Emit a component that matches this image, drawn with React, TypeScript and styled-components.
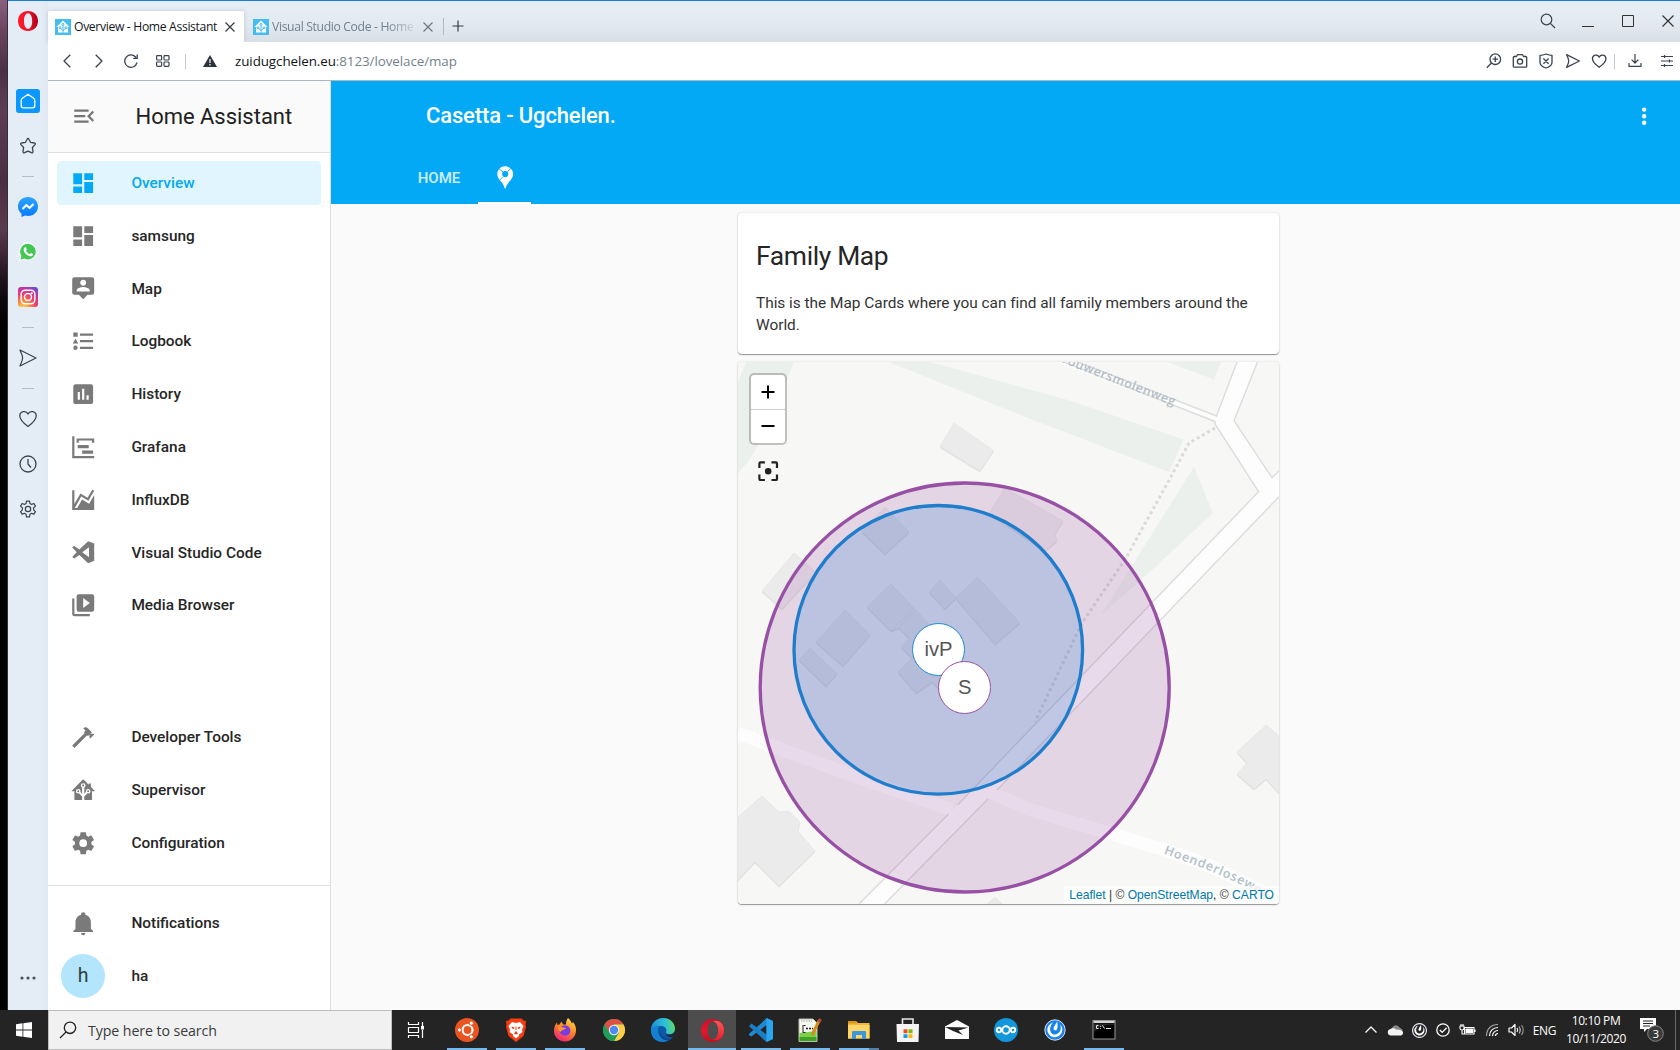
import React from "react";
import styled, { createGlobalStyle, css } from "styled-components";

const ui = `"Open Sans", "Noto Sans", sans-serif`;
const roboto = `Roboto, "Noto Sans", sans-serif`;

const Global = createGlobalStyle`
  *, *::before, *::after { box-sizing: border-box; }
  html, body { margin: 0; padding: 0; overflow: hidden; background: #000; }
  svg { display: block; flex: none; }
`;

/* ---------- frame ---------- */
const Desktop = styled.div`
  width: 1680px; height: 1050px; display: flex; flex-direction: column; overflow: hidden;
  font-family: ${ui};
`;
const Upper = styled.div`display: flex; height: 1010px;`;
const Wallpaper = styled.div`
  width: 8px; flex: none; border-right: 1px solid #34303a;
  background: linear-gradient(#8a6080 0, #6b4560 30px, #4b3045 70px, #5d3d55 110px, #4a2f42 180px, #5a3a4e 230px, #241520 275px, #0c070b 300px, #000 325px);
`;
const Browser = styled.div`flex: 1; display: flex; min-width: 0; border-top: 1px solid #1a7fd4; background: #e4ecf5;`;
const Rail = styled.nav`
  width: 40px; flex: none; display: flex; flex-direction: column; align-items: center; height: 1009px;
  background: linear-gradient(90deg, #e4ecf5 82%, #e0e8f4);
`;
const RailTop = styled.div`height: 77px; padding-top: 10px;`;
const RailCell = styled.div`height: 45px; width: 40px; display: flex; align-items: center; justify-content: center; padding-right: 1px;`;
const RailSep = styled.div`
  height: 16px; display: flex; align-items: center;
  &::after { content: ""; width: 12px; height: 1px; background: #b3bec8; }
`;
const RailHome = styled.div`
  width: 24px; height: 24px; border-radius: 3px; background: #0a97ff; display: flex; align-items: center; justify-content: center;
  margin-right: -1px;
`;
const RailMore = styled.div`margin-top: auto; height: 64px;`;
const Main = styled.div`flex: 1; min-width: 0; display: flex; flex-direction: column;`;

/* ---------- tabs ---------- */
const TabBar = styled.div`
  height: 41px; display: flex; align-items: flex-end; background: linear-gradient(#e6eef6 0, #e3eaf2 50%, #d8dfe7);
`;
const Tab = styled.div<{ $active?: boolean }>`
  height: 31px; width: ${p => (p.$active ? 196 : 199)}px; display: flex; align-items: center;
  padding: ${p => (p.$active ? "0 9px 0 7px" : "0 10px 0 9px")};
  font-size: 12.2px; line-height: 16px; white-space: nowrap; letter-spacing: -0.35px;
  color: ${p => (p.$active ? "#14181c" : "#70808f")};
  ${p => p.$active && css`background: #fff; border-radius: 2px 2px 0 0; box-shadow: 0 0 4px rgba(120,140,165,.35);`}
`;
const TabText = styled.span<{ $fade?: boolean }>`
  margin-left: 3px;
  ${p => p.$fade && css`mask-image: linear-gradient(90deg, #000 82%, rgba(0,0,0,.2));`}
`;
const TabClose = styled.span`margin-left: auto;`;
const TabSep = styled.span`width: 1px; height: 17px; background: #b0b9c2; margin-bottom: 7px;`;
const NewTab = styled.span`margin: 0 0 10px 8px;`;
const WinButtons = styled.div`margin: 0 -8px 0 auto; display: flex; height: 41px;`;
const WinButton = styled.div`width: 40px; height: 40px; display: flex; align-items: center; justify-content: center;`;

/* ---------- address bar ---------- */
const AddressBar = styled.div`
  height: 39px; background: #fff; border-bottom: 1px solid #abb8c4; display: flex; align-items: center; padding-left: 3px;
`;
const NavCell = styled.div<{ $w?: number }>`
  width: ${p => p.$w ?? 32}px; flex: none; display: flex; align-items: center; justify-content: center;
`;
const BarSep = styled.div`width: 1px; height: 15px; background: #c4c9ce;`;
const Url = styled.div`
  margin-left: 6px; font-size: 13.4px; letter-spacing: -0.08px; color: #74818d; white-space: nowrap;
  b { font-weight: 400; color: #101418; }
`;
const BarRight = styled.div`margin: 0 -3px 0 auto; display: flex; align-items: center;`;

/* ---------- Home Assistant ---------- */
const Page = styled.div`flex: 1; display: flex; min-height: 0; font-family: ${roboto}; background: #fafafa;`;
const Sidebar = styled.aside`
  width: 283px; flex: none; border-right: 1px solid #dedede; background: #fff; display: flex; flex-direction: column;
`;
const SideHeader = styled.div`
  height: 72px; flex: none; background: #fafafa; border-bottom: 1px solid #dedede; display: flex; align-items: center;
  padding: 0 0 1px 22.5px; font-size: 22px; color: #212121;
`;
const SideTitle = styled.span`margin-left: 38.6px; letter-spacing: -.02px;`;
const SideList = styled.div`display: flex; flex-direction: column; gap: 8.8px; padding: 8px 9px 0;`;
const SideBottom = styled(SideList)`margin-top: auto; padding-bottom: 20px; padding-top: 0;`;
const SideFooter = styled(SideList)`border-top: 1px solid #dedede; height: 125px; padding-top: 15px; padding-bottom: 0;`;
const Item = styled.div<{ $active?: boolean }>`
  height: 44px; flex: none; display: flex; align-items: center; padding-left: 13px; border-radius: 4px;
  font-size: 15.4px; font-weight: 500; color: ${p => (p.$active ? "#03a9f4" : "#262626")};
  background: ${p => (p.$active ? "#e1f5fe" : "transparent")};
  svg { fill: ${p => (p.$active ? "#03a9f4" : "#7a7a7a")}; }
`;
const ItemText = styled.span`margin-left: 35px;`;
const Avatar = styled.span`
  width: 44px; height: 44px; border-radius: 50%; background: #b3e5fc; margin: 0 -8.8px; display: flex; align-items: center; justify-content: center;
  font-size: 19.5px; font-weight: 400; color: #303a40;
`;
const Content = styled.main`flex: 1; min-width: 0; display: flex; flex-direction: column;`;
const Header = styled.header`height: 123px; flex: none; background: #03a9f4; color: #fff; display: flex; flex-direction: column;`;
const HeaderRow = styled.div`
  height: 70px; display: flex; align-items: center; justify-content: space-between; padding: 0 23px 0 95px; font-size: 22px;
  font-weight: 500; letter-spacing: -.14px;
`;
const HeaderTitle = styled.span`padding-bottom: 2px;`;
const ViewTabs = styled.div`display: flex; height: 53px; padding-left: 69px; font-size: 15px; font-weight: 600;`;
const ViewTab = styled.div<{ $w: number; $active?: boolean }>`
  width: ${p => p.$w}px; display: flex; align-items: center; justify-content: center; border-bottom: 2px solid ${p => (p.$active ? "#fff" : "transparent")};
  color: ${p => (p.$active ? "#fff" : "rgba(255,255,255,.78)")}; padding: 2px 0 0 ${p => (p.$active ? 1 : 0)}px;
`;
const Column = styled.div`width: 541px; margin: 9px 0 0 407px; display: flex; flex-direction: column; gap: 8px;`;
const cardShadow = css`border-radius: 4px; box-shadow: 0 1px 1px rgba(0,0,0,.38), 0 0 3px rgba(0,0,0,.13);`;
const Card = styled.section`
  height: 141px; background: #fff; padding: 23px 18px; ${cardShadow} color: #262626;
`;
const CardTitle = styled.h1`margin: 0; font-size: 26.4px; font-weight: 400; line-height: 40px; letter-spacing: -.34px;`;
const CardText = styled.p`margin: 16px 0 0; font-size: 15.4px; line-height: 22px; letter-spacing: -.01px; color: #333;`;
const MapCard = styled.section`position: relative; height: 542px; overflow: hidden; background: #f7f7f5; ${cardShadow}`;
const ZoomBox = styled.div`
  position: absolute; left: 11.4px; top: 11px; width: 38px; height: 72px; border: 2px solid rgba(0,0,0,.22); border-radius: 5px;
  background: #fff; background-clip: padding-box; display: flex; flex-direction: column;
`;
const ZoomButton = styled.div`
  flex: 1; display: flex; align-items: center; justify-content: center;
  & + & { border-top: 1px solid #ccc; }
`;
const Focus = styled.div`position: absolute; left: 17px; top: 96px;`;
const Marker = styled.div<{ $x: number; $y: number; $c: string }>`
  position: absolute; left: ${p => p.$x - 26.5}px; top: ${p => p.$y - 26.5}px; width: 53px; height: 53px; border-radius: 50%;
  border: 1px solid ${p => p.$c}; background: #fff; color: #555; display: flex; align-items: center; justify-content: center;
  font: 20.2px "Liberation Sans", Arial, sans-serif;
`;
const Attribution = styled.div`
  position: absolute; right: 0; bottom: 0; height: 18px; width: 215px; background: rgba(255,255,255,.72); color: #333;
  font: 12.1px/18px "Liberation Sans", Arial, sans-serif; white-space: nowrap; text-align: right; padding-right: 5px;
  a { color: #0078a8; }
`;

/* ---------- taskbar ---------- */
const Taskbar = styled.footer`height: 40px; background: #242424; display: flex; color: #fff;`;
const Start = styled.div`width: 48px; display: flex; align-items: center; justify-content: center;`;
const Search = styled.div`
  width: 344px; background: #f1f1f1; border: 1px solid #bdbdbd; display: flex; align-items: center; padding-left: 10px;
  color: #3b3b3b; font-size: 14.2px; letter-spacing: -.09px;
`;
const SearchText = styled.span`margin-left: 11px;`;
const Apps = styled.div`display: flex; gap: 1px; margin-left: 3px;`;
const AppButton = styled.div<{ $line?: "on" | "full" | "stack" }>`
  width: 48px; height: 40px; display: flex; flex-direction: column; align-items: center; justify-content: center;
  background: ${p => (p.$line === "full" ? "#4d4d4d" : "transparent")};
  background-image: ${p =>
    p.$line === "stack" ? "linear-gradient(90deg, #76b9ed 75%, #5580a5 75%)"
      : p.$line ? "linear-gradient(#76b9ed, #76b9ed)" : "none"};
  background-repeat: no-repeat; background-position: 50% 100%; background-size: ${p => (p.$line === "full" ? 48 : 40)}px 2px;
`;
const Tray = styled.div`margin-left: auto; display: flex; align-items: center; height: 40px;`;
const TrayCell = styled.div<{ $w?: number; $indent?: number }>`
  width: ${p => p.$w ?? 24}px; display: flex; align-items: center; justify-content: center; font-size: 12px; letter-spacing: -.35px;
  padding-left: ${p => p.$indent ?? 0}px;
`;
const Clock = styled.div`width: 70px; font-size: 12px; line-height: 18px; text-align: center; letter-spacing: -.38px; white-space: nowrap;`;
const ShowDesktop = styled.div`width: 5px; height: 40px; border-left: 1px solid #6a6a6a; margin-left: 8px;`;

/* ---------- icons ---------- */
const Mdi = ({ d, size = 26.4, fill }: { d: string; size?: number; fill?: string }) => (
  <svg width={size} height={size} viewBox="0 0 24 24" fill={fill}><path fillRule="evenodd" d={d} /></svg>
);
const Line = ({ w = 20, h = 20, c = "#3a4350", sw = 1.2, children }: any) => (
  <svg width={w} height={h} viewBox={`0 0 ${w} ${h}`} fill="none" stroke={c} strokeWidth={sw} strokeLinejoin="round">{children}</svg>
);

const P = {
  dash: "M13,3V9H21V3M13,21H21V11H13M3,21H11V15H3M3,13H11V3H3V13Z",
  map: "M20,2H4A2,2 0 0,0 2,4V16A2,2 0 0,0 4,18H8L12,22L16,18H20A2,2 0 0,0 22,16V4A2,2 0 0,0 20,2M12,4.3C13.5,4.3 14.7,5.5 14.7,7C14.7,8.5 13.5,9.7 12,9.7C10.5,9.7 9.3,8.5 9.3,7C9.3,5.5 10.5,4.3 12,4.3M18,15H6V14.1C6,12.1 10,11 12,11C14,11 18,12.1 18,14.1V15Z",
  log: "M5,9.5L7.5,14H2.5L5,9.5M3,4H7V8H3V4M5,20A2,2 0 0,0 7,18A2,2 0 0,0 5,16A2,2 0 0,0 3,18A2,2 0 0,0 5,20M9,5V7H21V5H9M9,19H21V17H9V19M9,11V13H21V11H9Z",
  hist: "M9,17H7V10H9M13,17H11V7H13M17,17H15V13H17M19,3H5A2,2 0 0,0 3,5V19A2,2 0 0,0 5,21H19A2,2 0 0,0 21,19V5A2,2 0 0,0 19,3Z",
  gantt: "M2,2H4V20H22V22H2V2M7,10H17V13H7V10M11,15H21V18H11V15M6,4H22V8H20V6H8V8H6V4Z",
  chart: "M17.45,15.18L22,7.31V21H2V3H4V15.54L9.5,6L16,9.78L20.24,2.45L21.97,3.45L16.74,12.5L10.23,8.75L4.31,19H6.57L10.96,11.44L17.45,15.18Z",
  vsc: "M16.5,2L8.5,9.5L3.9,6.3L2,7.6L6.1,12L2,16.4L3.9,17.7L8.5,14.5L16.5,22L22,19.8V4.2L16.5,2M17.3,7.5V16.5L11.2,12L17.3,7.5",
  media: "M4,6H2V20A2,2 0 0,0 4,22H18V20H4V6M20,2A2,2 0 0,1 22,4V16A2,2 0 0,1 20,18H8A2,2 0 0,1 6,16V4A2,2 0 0,1 8,2H20M12,14.5V5.5L18,10L12,14.5Z",
  hammer: "M2,19.63L13.43,8.2L12.72,7.5L14.14,6.07L12,3.89C13.2,2.7 15.09,2.7 16.27,3.89L19.87,7.5L18.45,8.91H21.29L22,9.62L18.45,13.21L17.74,12.5V9.62L16.27,11.04L15.56,10.33L4.13,21.76L2,19.63Z",
  ha: "M21.8,13H20V21H13V17.67L15.79,14.88L16.5,15C17.66,15 18.6,14.06 18.6,12.9C18.6,11.74 17.66,10.8 16.5,10.8A2.1,2.1 0 0,0 14.4,12.9L14.5,13.61L13,15.13V9.65C13.66,9.29 14.1,8.6 14.1,7.8A2.1,2.1 0 0,0 12,5.7A2.1,2.1 0 0,0 9.9,7.8C9.9,8.6 10.34,9.29 11,9.65V15.13L9.5,13.61L9.6,12.9A2.1,2.1 0 0,0 7.5,10.8A2.1,2.1 0 0,0 5.4,12.9A2.1,2.1 0 0,0 7.5,15L8.21,14.88L11,17.67V21H4V13H2.25C1.83,13 1.42,13 1.42,12.79C1.43,12.57 1.85,12.15 2.28,11.72L11,3C11.33,2.67 11.67,2.33 12,2.33C12.33,2.33 12.67,2.67 13,3L17,7V6H19V9L21.78,11.78C22.18,12.18 22.59,12.59 22.6,12.8C22.6,13 22.2,13 21.8,13M7.5,12A0.9,0.9 0 0,1 8.4,12.9A0.9,0.9 0 0,1 7.5,13.8A0.9,0.9 0 0,1 6.6,12.9A0.9,0.9 0 0,1 7.5,12M16.5,12C17,12 17.4,12.4 17.4,12.9C17.4,13.4 17,13.8 16.5,13.8A0.9,0.9 0 0,1 15.6,12.9A0.9,0.9 0 0,1 16.5,12M12,6.9C12.5,6.9 12.9,7.3 12.9,7.8C12.9,8.3 12.5,8.7 12,8.7C11.5,8.7 11.1,8.3 11.1,7.8C11.1,7.3 11.5,6.9 12,6.9Z",
  cog: "M12,15.5A3.5,3.5 0 0,1 8.5,12A3.5,3.5 0 0,1 12,8.5A3.5,3.5 0 0,1 15.5,12A3.5,3.5 0 0,1 12,15.5M19.43,12.97C19.47,12.65 19.5,12.33 19.5,12C19.5,11.67 19.47,11.34 19.43,11L21.54,9.37C21.73,9.22 21.78,8.95 21.66,8.73L19.66,5.27C19.54,5.05 19.27,4.96 19.05,5.05L16.56,6.05C16.04,5.66 15.5,5.32 14.87,5.07L14.5,2.42C14.46,2.18 14.25,2 14,2H10C9.75,2 9.54,2.18 9.5,2.42L9.13,5.07C8.5,5.32 7.96,5.66 7.44,6.05L4.95,5.05C4.73,4.96 4.46,5.05 4.34,5.27L2.34,8.73C2.21,8.95 2.27,9.22 2.46,9.37L4.57,11C4.53,11.34 4.5,11.67 4.5,12C4.5,12.33 4.53,12.65 4.57,12.97L2.46,14.63C2.27,14.78 2.21,15.05 2.34,15.27L4.34,18.73C4.46,18.95 4.73,19.03 4.95,18.95L7.44,17.94C7.96,18.34 8.5,18.68 9.13,18.93L9.5,21.58C9.54,21.82 9.75,22 10,22H14C14.25,22 14.46,21.82 14.5,21.58L14.87,18.93C15.5,18.67 16.04,18.34 16.56,17.94L19.05,18.95C19.27,19.03 19.54,18.95 19.66,18.73L21.66,15.27C21.78,15.05 21.73,14.78 21.54,14.63L19.43,12.97Z",
  bell: "M21,19V20H3V19L5,17V11C5,7.9 7.03,5.17 10,4.29C10,4.19 10,4.1 10,4A2,2 0 0,1 12,2A2,2 0 0,1 14,4C14,4.1 14,4.19 14,4.29C16.97,5.17 19,7.9 19,11V17L21,19M14,21A2,2 0 0,1 12,23A2,2 0 0,1 10,21",
  menu: "M3 18h13v-2H3v2zm0-5h10v-2H3v2zm0-7v2h13V6H3zm18 9.59L17.42 12 21 8.41 19.59 7l-5 5 5 5L21 15.59z",
  dots: "M12,16A2,2 0 0,1 14,18A2,2 0 0,1 12,20A2,2 0 0,1 10,18A2,2 0 0,1 12,16M12,10A2,2 0 0,1 14,12A2,2 0 0,1 12,14A2,2 0 0,1 10,12A2,2 0 0,1 12,10M12,4A2,2 0 0,1 14,6A2,2 0 0,1 12,8A2,2 0 0,1 10,6A2,2 0 0,1 12,4Z",
  focus: "M12,9A3,3 0 0,0 9,12A3,3 0 0,0 12,15A3,3 0 0,0 15,12A3,3 0 0,0 12,9M19,19H15V21H19A2,2 0 0,0 21,19V15H19M19,3H15V5H19V9H21V5A2,2 0 0,0 19,3M5,5H9V3H5A2,2 0 0,0 3,5V9H5M5,15H3V19A2,2 0 0,0 5,21H9V19H5V15Z",
};

const HEART = "M10 17.5C4 13 1.8 10.5 1.8 7A4.3 4.3 0 0 1 10 5.1A4.3 4.3 0 0 1 18.2 7C18.2 10.5 16 13 10 17.5Z";
const SEND = "M2 2L18 10L2 18C3 15 4.6 13 4.6 10S3 5 2 2Z";

const OperaLogo = ({ s = 20, id }: { s?: number; id: string }) => (
  <svg width={s} height={s} viewBox="0 0 24 24">
    <defs>
      <linearGradient id={id} x1="0" x2="1"><stop offset="0" stopColor="#ff1b2d" /><stop offset=".55" stopColor="#f0142a" /><stop offset="1" stopColor="#a70014" /></linearGradient>
    </defs>
    <path fill={`url(#${id})`} fillRule="evenodd" d="M12 0C19 0 24 5 24 12S19 24 12 24S0 19 0 12S5 0 12 0ZM12 2.6C9 2.6 7.2 6.5 7.2 12S9 21.4 12 21.4S17 17.5 17 12S15 2.6 12 2.6Z" />
  </svg>
);
const OperaTaskLogo = () => (
  <svg width="23" height="23" viewBox="0 0 24 24">
    <defs>
      <linearGradient id="opB" x1="0" x2="0" y1="0" y2="1"><stop offset="0" stopColor="#c8102a" /><stop offset=".5" stopColor="#e0182d" /><stop offset="1" stopColor="#c40f22" /></linearGradient>
      <linearGradient id="opC" x1="0" x2="0" y1="0" y2="1"><stop offset="0" stopColor="#ff5a5a" /><stop offset="1" stopColor="#e02030" /></linearGradient>
    </defs>
    <path fill="url(#opB)" fillRule="evenodd" d="M12 0C19 0 24 5 24 12S19 24 12 24S0 19 0 12S5 0 12 0ZM12.500 2.600C9.500 2.600 7 6.500 7 12S9.500 21.400 12.500 21.400S18 17.500 18 12S15.500 2.600 12.500 2.600Z" />
    <path fill="url(#opC)" d="M12.500 2.600C16 0 24 3 24 12S16 24 12.500 21.400C15.500 21.400 18 17.500 18 12S15.500 2.600 12.500 2.600Z" />
  </svg>
);
const Favicon = () => (
  <svg width="16" height="16" viewBox="0 0 16 16">
    <rect width="16" height="16" fill="#45bdf0" />
    <path d="M8 1.6L14.5 8H13V13.6H3V8H1.5Z" fill="#fff" />
    <g stroke="#45bdf0" fill="none" strokeWidth="1"><path d="M8 13.6V6M8 11.6L5.3 9M8 11.6L10.7 9" /><circle cx="8" cy="5.4" r="1" /><circle cx="5" cy="8.8" r="1" /><circle cx="11" cy="8.8" r="1" /></g>
  </svg>
);
const Cross = ({ c = "#333a42", s = 10 }: any) => <Line w={s} h={s} c={c}><path d={`M.5 .5L${s - .5} ${s - .5}M${s - .5} .5L.5 ${s - .5}`} /></Line>;

const Gear = () => (
  <svg width="18" height="18" viewBox="0 0 24 24" fill="none" stroke="#3a4350" strokeWidth="1.6">
    <path strokeLinejoin="round" d="M10 1.5h4l.6 3.2 2.2 1.2 3.1-1.2 2 3.4-2.4 2.2v2.8l2.4 2.4-2 3.4-3.1-1.2-2.2 1.2-.6 3.6h-4l-.6-3.6-2.2-1.2-3.1 1.2-2-3.4 2.4-2.4v-2.8L2.1 8.1l2-3.4 3.1 1.2 2.2-1.2z" />
    <circle cx="12" cy="12" r="3.6" />
  </svg>
);

const OperaRail = () => (
  <Rail>
    <RailTop><OperaLogo id="opA" /></RailTop>
    <RailCell><RailHome>
      <Line w={16} h={16} c="#fff" sw={1.3}><path d="M8 1.2L14 5.6Q14.8 6.4 14.8 7.4V12.5Q14.8 14.8 12.5 14.8H3.5Q1.2 14.8 1.2 12.5V7.4Q1.2 6.4 2 5.6Z" /></Line>
    </RailHome></RailCell>
    <RailCell><Line w={18} h={18} sw={1.3}><path d="M9 1.5Q9.6 1.5 9.9 2.2L11.5 5.3L15.6 6Q17 6.4 16 7.6L13.4 10.5L14 14.6Q14 16.3 12.4 15.7L9 14.2L5.6 15.7Q4 16.3 4 14.6L4.6 10.5L2 7.6Q1 6.4 2.4 6L6.5 5.3L8.1 2.2Q8.4 1.5 9 1.5Z" /></Line></RailCell>
    <RailSep />
    <RailCell>
      <svg width="20" height="20" viewBox="0 0 20 20">
        <defs><linearGradient id="msg" x1="0" y1="0" x2="0" y2="1"><stop offset="0" stopColor="#2aa6ff" /><stop offset="1" stopColor="#0a78ff" /></linearGradient></defs>
        <path fill="url(#msg)" d="M10 0C15.7 0 20 4 20 9.5S15.7 19 10 19C9 19 8 18.9 7.1 18.6L3.5 20V16.6C1.3 15 0 12.5 0 9.5C0 4 4.3 0 10 0Z" />
        <path fill="none" stroke="#fff" strokeWidth="2" d="M4.5 12L8.3 8.2L11.6 10.8L15.5 7" />
      </svg>
    </RailCell>
    <RailCell>
      <svg width="20" height="20" viewBox="0 0 20 20">
        <path fill="#fff" d="M10.3 .5A9 9 0 1 1 6 17.8L.8 19.3L2.3 14.3A9 9 0 0 1 10.3 .5Z" />
        <path fill="#44c654" d="M10.3 1.7A7.9 7.9 0 1 1 6.2 16.6L2.4 17.7L3.5 14A7.9 7.9 0 0 1 10.3 1.7Z" />
        <path fill="#fff" d="M7.2 5.3C8 5 8.3 5.5 8.8 7.2C8.9 7.7 8 8.3 8 8.6C8.8 10.4 10 11.4 11.7 12.1C12.2 12.1 12.6 10.9 13.2 11C15 11.8 15.2 12 15 12.7C14.6 14.2 12.8 14.7 11.2 14.1C8.4 13 6.5 11 5.7 8.6C5.4 7.1 6 5.7 7.2 5.3Z" />
      </svg>
    </RailCell>
    <RailCell>
      <svg width="20" height="20" viewBox="0 0 20 20">
        <defs>
          <radialGradient id="ig" cx=".25" cy="1.05" r="1.15"><stop offset="0" stopColor="#ffd95a" /><stop offset=".3" stopColor="#fb8a3c" /><stop offset=".6" stopColor="#ea3a6c" /><stop offset=".85" stopColor="#c234a6" /><stop offset="1" stopColor="#6a4fd0" /></radialGradient>
        </defs>
        <rect width="20" height="20" rx="3" fill="url(#ig)" />
        <g fill="none" stroke="#fff" strokeWidth="1.5"><rect x="3.2" y="3.2" width="13.6" height="13.6" rx="4" /><circle cx="10" cy="10" r="3.5" /></g>
        <circle cx="13.8" cy="6.2" r="1" fill="#fff" />
      </svg>
    </RailCell>
    <RailSep />
    <RailCell><Line w={20} h={20}><path d={SEND} /></Line></RailCell>
    <RailSep />
    <RailCell><Line w={20} h={20} sw={1.3}><path d={HEART} /></Line></RailCell>
    <RailCell><Line w={18} h={18} sw={1.3}><circle cx="9" cy="9" r="8" /><path d="M9 4V9L12 12.5" /></Line></RailCell>
    <RailCell><Gear /></RailCell>
    <RailMore>
      <svg width="16" height="64" viewBox="0 0 16 64" fill="#4a535e"><circle cx="2" cy="32" r="1.6" /><circle cx="8" cy="32" r="1.6" /><circle cx="14" cy="32" r="1.6" /></svg>
    </RailMore>
  </Rail>
);

const BrowserTabs = () => (
  <TabBar>
    <Tab $active><Favicon /><TabText>Overview - Home Assistant</TabText><TabClose><Cross /></TabClose></Tab>
    <Tab><Favicon /><TabText $fade>Visual Studio Code - Home</TabText><TabClose><Cross c="#6d7781" /></TabClose></Tab>
    <TabSep />
    <NewTab><Line w={12} h={12} c="#333a42"><path d="M6 .5V11.5M.5 6H11.5" /></Line></NewTab>
    <WinButtons>
      <WinButton><Line w={16} h={16}><circle cx="6.5" cy="6.5" r="5.3" /><path d="M10.4 10.4L15 15" /></Line></WinButton>
      <WinButton><Line w={12} h={14} sw={1} c="#333"><path d="M0 12.5H12" /></Line></WinButton>
      <WinButton><Line w={12} h={12} sw={1} c="#333"><path d="M.5 .5H11.5V11.5H.5Z" /></Line></WinButton>
      <WinButton><Cross s={12} c="#333" /></WinButton>
    </WinButtons>
  </TabBar>
);

const Address = () => (
  <AddressBar>
    <NavCell><Line w={8} h={14} sw={1.3}><path d="M7.3 .7L1 7L7.3 13.3" /></Line></NavCell>
    <NavCell><Line w={8} h={14} sw={1.3}><path d="M.7 .7L7 7L.7 13.3" /></Line></NavCell>
    <NavCell><Line w={14} h={14} sw={1.3}><path d="M13 8.5A6.2 6.2 0 1 1 12 3.5M13.2 .6V4.4H9.3" /></Line></NavCell>
    <NavCell><Line w={14} h={12} sw={1.2}><rect x=".6" y=".6" width="5" height="4.4" rx=".8" /><rect x="8" y=".6" width="5" height="4.4" rx=".8" /><rect x=".6" y="7" width="5" height="4.4" rx=".8" /><rect x="8" y="7" width="5" height="4.4" rx=".8" /></Line></NavCell>
    <NavCell $w={12}><BarSep /></NavCell>
    <NavCell $w={38}>
      <svg width="14" height="12" viewBox="0 0 14 12"><path d="M7 0L14 12H0Z" fill="#29323d" /><path d="M7 4V8M7 9V10.5" stroke="#fff" strokeWidth="1.2" /></svg>
    </NavCell>
    <Url><b>zuidugchelen.eu</b>:8123/lovelace/map</Url>
    <BarRight>
      <NavCell $w={26}><Line w={16} h={16} sw={1.3}><circle cx="9.3" cy="6.2" r="5.3" /><path d="M5.5 10L.8 14.8M9.3 3.5V8.9M6.6 6.2H12" /></Line></NavCell>
      <NavCell $w={26}><Line w={16} h={16} sw={1.3}><path d="M2.2 3.5H4.5L5.5 1.7H10.5L11.5 3.5H13.8Q14.7 3.5 14.7 4.4V13.3Q14.7 14.2 13.8 14.2H2.2Q1.3 14.2 1.3 13.3V4.4Q1.3 3.5 2.2 3.5Z" /><circle cx="8" cy="8.6" r="2.6" /></Line></NavCell>
      <NavCell $w={26}><Line w={14} h={16} sw={1.3}><path d="M7 1Q10 2.3 13 2.3V9.5Q13 13 7 15Q1 13 1 9.5V2.3Q4 2.3 7 1ZM4.4 5.5L9.6 10.7M9.6 5.5L4.4 10.7" /></Line></NavCell>
      <NavCell $w={27}><Line w={16} h={16} sw={1.3}><path transform="scale(.8)" strokeWidth="1.6" d={SEND} /></Line></NavCell>
      <NavCell $w={25}><Line w={16} h={16} sw={1.2}><path transform="scale(.82)" strokeWidth="1.6" d={HEART} /></Line></NavCell>
      <NavCell $w={7}><BarSep /></NavCell>
      <NavCell $w={33}><Line w={14} h={14} sw={1.2}><path d="M1 9V12.4H13V9M7 0V8.8M3.6 5.6L7 9L10.4 5.6" /></Line></NavCell>
      <NavCell $w={32}><Line w={14} h={12} sw={1.2}><path d="M1 1.5H13M1 6H13M1 10.5H13M4.5 0V3M9.5 4.5V7.5M4.5 9V12" /></Line></NavCell>
    </BarRight>
  </AddressBar>
);

/* ---------- map drawing ---------- */
const buildings = [
  "216,61 255.6,88.5 242,109 202,84.5",
  "56,191 78,210 44,247 24,229",
  "147,145 171,170 147,192 124,170",
  "267,126 325,159 317,172 319,179 307,189 251,151",
  "153,222 190,261 194,300 213,310 206,331 194,320 178,331 160,310 174,296 163,285 171,276 161,266 153,269 129,245",
  "202,218 218,236 207,247 191,230",
  "239.5,215 282,261 257,282 217.5,236",
  "107,248 132,273 105,304 78,280",
  "72,286 99,312 88,324 61,298",
  "0,455 24,434 41,450 51,449 62,460 60,469 77,489 41,524 17,500 0,518",
  "528,363 541,374 541,431 528,417 516,427 499,412 509,401 499,390",
  "257,535 264,542 249,542",
];
const MapArt = () => (
  <svg width="541" height="542" viewBox="0 0 541 542">
    <rect width="541" height="542" fill="#f7f7f5" />
    <g fill="#ecf0ec">
      <path d="M8 0H55.6L40 40L22 80L13.4 95L0 112V20Z" />
      <path d="M151 0H192L330 38L445.6 77.5L431 110L290 56Z" />
      <path d="M429.5 0H483L476 17.5Z" />
      <path d="M456 105L475 151L403 218L363 253Z" />
    </g>
    <g fill="#e0e0de" transform="translate(0 1.5)">{buildings.map(b => <polygon key={b} points={b} />)}</g>
    <g fill="#ebebeb" stroke="#e2e2e2" strokeWidth=".6">{buildings.map(b => <polygon key={b} points={b} />)}</g>
    <path d="M153 269L176 246M161 266L176 250" stroke="#e0e0e0" strokeWidth=".8" />
    <path d="M477 66L451 81L435 111L388 196L344 261L320.6 310L297 360" fill="none" stroke="#dadada" strokeWidth="3" strokeDasharray="3 3" />
    <path d="M0 371L99 408L214 448M252 430L290 447L367 470L424 487L470 503L525 530" fill="none" stroke="#fdfdfd" strokeWidth="13" />
    <g fill="#fdfdfd">
      <path d="M340 0L478.5 54L477 59.5L318 0Z" />
      <path d="M499 0H519.5L496 58.7L534 115.7L541 108.7V134.7L259 428L250 437L146.6 542H121L210.6 452L219.5 443L520.6 129.7L477 62L478.5 54Z" />
    </g>
    <path d="M340 0L478.5 54L499 0M519.5 0L496 58.7L534 115.7L541 108.7M318 -3L477 59.5V62L520.6 129.7L219.5 443M541 134.7L259 428M210.6 452L121 542M250 437L146.6 542" fill="none" stroke="#dcdcdc" strokeWidth="1.4" />
    <defs>
      <path id="lblA" d="M277.4 -17.5L436 44" />
      <path id="lblB" d="M425.5 491.5L470 508L500 521L560 552" />
    </defs>
    <g fontFamily='"Open Sans", "Noto Sans", sans-serif' fontSize="12.5" fontWeight="600" fill="#b2bec8" letterSpacing=".55">
      <text textAnchor="end"><textPath href="#lblA" startOffset="100%">Brouwersmolenweg</textPath></text>
      <text letterSpacing=".8"><textPath href="#lblB">Hoenderloseweg</textPath></text>
    </g>
    <circle cx="226.7" cy="325.5" r="204.5" fill="#9b4fa3" fillOpacity=".2" stroke="#9850a5" strokeWidth="3.3" />
    <circle cx="200.3" cy="287.8" r="144.3" fill="#1b7ecc" fillOpacity=".2" stroke="#1f7dcb" strokeWidth="3.3" />
  </svg>
);

/* ---------- taskbar icons ---------- */
const S = ({ children, w = 24, h = 24 }: any) => <svg width={w} height={h} viewBox={`0 0 ${w} ${h}`}>{children}</svg>;
const Ubuntu = () => (
  <S><circle cx="12" cy="12" r="12" fill="#e95420" /><circle cx="12.5" cy="12" r="5" fill="none" stroke="#fff" strokeWidth="2.2" />
    <g fill="#fff" stroke="#e95420" strokeWidth="1"><circle cx="4.4" cy="12" r="2.1" /><circle cx="16.3" cy="5.2" r="2.1" /><circle cx="16.3" cy="18.8" r="2.1" /></g></S>
);
const Brave = () => (
  <S><path d="M6.5 .5H17.5L19.5 2.5L22 3L21.5 7L22 8.5L19.5 18L12 24L4.5 18L2 8.5L2.5 7L2 3L4.5 2.5Z" fill="#f83c10" />
    <path d="M8 4L12 5L16 4L19.5 8L18 11.5L18.5 14L15 16.5V18L12 20.5L9 18V16.5L5.5 14L6 11.5L4.5 8Z" fill="#fff" />
    <path d="M7.5 8.5L10.5 9.5L10 11L8 10.5ZM16.5 8.5L13.5 9.5L14 11L16 10.5ZM12 13L14 15.5L12 16.5L10 15.5ZM11.5 8.5H12.5V12H11.5Z" fill="#f83c10" /></S>
);
const Firefox = () => (
  <S><defs><linearGradient id="ff" x1=".8" y1="0" x2=".3" y2="1"><stop offset="0" stopColor="#ffe14a" /><stop offset=".45" stopColor="#ff8a2a" /><stop offset="1" stopColor="#f0207a" /></linearGradient></defs>
    <path d="M15 0C18 2.5 18 4 19 5.5L20 4C22.5 7 23.3 10 23 13C22.5 19 18 23.5 12 23.5S1 19 1 13C1 9.5 2 6.5 4 4.5L4.5 7L6.5 6.5L8.5 3.5L10 6.5L13 6.5C13 4 13.5 2 15 0Z" fill="url(#ff)" />
    <circle cx="12" cy="12.5" r="5.3" fill="#7a3be0" /><path d="M5 9C8 8 9 9.5 13 10C12 12 9 11.5 7.5 14C6 13 5 11 5 9Z" fill="#ff9a2a" /></S>
);
const Chrome = () => (
  <S><circle cx="12" cy="12" r="11" fill="#4caf50" /><path d="M2.47 6.5A11 11 0 0 1 21.53 6.5H12L7.24 14.75Z" fill="#dd5144" /><path d="M21.53 6.5A11 11 0 0 1 12 23L16.76 14.75L12 6.5Z" fill="#ffcd46" /><path d="M2.47 6.5A11 11 0 0 0 12 23L16.76 14.75L7.24 14.75Z" fill="#1f9d5b" /><circle cx="12" cy="12" r="5.2" fill="#f1f1f1" /><circle cx="12" cy="12" r="4.2" fill="#4a8af4" /></S>
);
const Edge = () => (
  <S><defs><linearGradient id="eg" x1="0" y1=".5" x2="1" y2=".4"><stop offset="0" stopColor="#1a90d8" /><stop offset=".6" stopColor="#2fc0d8" /><stop offset="1" stopColor="#5fdc5a" /></linearGradient></defs>
    <circle cx="12" cy="12" r="12" fill="#0f5aa8" />
    <path d="M0 11C1 4 6 0 12 0C19 0 24 5 24 10.5C24 14 21.5 16 18.5 16C15.5 16 14.5 15 15.2 13.5C16 11.5 14.5 8 10 8C5 8 1 10 0 14Z" fill="url(#eg)" />
    <path d="M0 12.5C1 8.5 5 7.5 8.5 7.8C6 11 6 18 12 21C14 22 16 22 18 21.5C15 24 11 24.5 8 23.5C3 22 0 18 0 12.5Z" fill="#1580d0" />
    <path d="M9.5 12C9 16 12 20 17 20C19.5 20 21.5 19 22.3 18.2C21 21 18.5 22.5 16 22.5C10 22 7.5 16.5 9.5 12Z" fill="#0c4a92" />
    <path d="M14 15.5C15 17.5 20 18 24 14L24 24H19L22.3 18.2C19 20 15.5 18.5 14 15.5Z" fill="#242424" /></S>
);
const VsCode = () => (
  <S><path d="M17.5 0L24 3V21L17.5 24L7.5 14.5L2.5 18.5L0 17.2V15.8L12 5.5L17.5 0ZM17.5 7L11 12L17.5 17Z" fill="#1f8ad2" fillRule="evenodd" /><path d="M0 8.2L2.5 5.5L18 17V24L0 8.2Z" fill="#1b7fc8" /><path d="M17.5 0L24 3V21L17.5 24Z" fill="#2ba5f0" /></S>
);
const Notepad = () => (
  <S w={26}><path d="M2 1H16L20 5V23.5H2Z" fill="#f4f8ee" stroke="#b8c0b0" /><path d="M2.5 15L19.5 13V23H2.5Z" fill="#7dd04a" /><path d="M2.5 19H19.5V23H2.5Z" fill="#3fa322" /><path d="M4 3H15" stroke="#9aa" strokeDasharray="1.5 1" />
    <path d="M6 7V15M6.5 7.5H8.5M6.5 14.5H8.5" stroke="#222" /><path d="M9 10.5H16" stroke="#222" strokeWidth="1.6" strokeDasharray="2 1" /><path d="M22.5 2L15 17" stroke="#d98a1a" strokeWidth="3" /><path d="M23.5 1L22 4" stroke="#b04a3a" strokeWidth="3" /></S>
);
const Explorer = () => (
  <S><path d="M1 3H9L11 5H22.5V20.5H1Z" fill="#f0b83a" /><path d="M1 3H9L10 5.5H1Z" fill="#d99a10" /><path d="M1 7H22.5V20.5H1Z" fill="#ffd667" /><path d="M5 21V14Q5 13 6 13H18Q19 13 19 14V21H15V17H9V21Z" fill="#3a96dd" /></S>
);
const Store = () => (
  <S><path d="M6.5 7V1H17V7" fill="none" stroke="#e8e8e8" strokeWidth="1.6" /><path d="M.5 6H23L22.5 24H1Z" fill="#f4f4f4" /><path d="M7.5 11.3H11.5V15.2H7.5Z" fill="#f04e23" /><path d="M12.500 11.3H16.5V15.2H12.5Z" fill="#7db900" /><path d="M7.5 16.2H11.5V20H7.5Z" fill="#1ba0e8" /><path d="M12.5 16.2H16.5V20H12.5Z" fill="#fdb813" /></S>
);
const Mail = () => <S><path d="M12 2L24 8.5V21H0V8.5Z" fill="#fff" /><path d="M0 9L23.5 9.5L13.5 12.5L18 17L8 13Z" fill="#242424" /></S>;
const Nextcloud = () => (
  <S><circle cx="12" cy="12" r="12" fill="#1296dc" /><g fill="none" stroke="#fff" strokeWidth="1.9"><circle cx="12" cy="12" r="3.7" /><circle cx="5" cy="12" r="2.2" /><circle cx="19" cy="12" r="2.2" /></g></S>
);
const Matter = ({ c = "#1583e8", s = 22, bg = "#fff", sw = 1 }: any) => (
  <svg width={s} height={s} viewBox="0 0 22 22"><circle cx="11" cy="11" r="10.2" fill={c} stroke="#dde" strokeWidth={sw} /><path d="M9 3.5A7.5 7.5 0 1 0 16 5.3C18 9.5 16 15 11 15.5C6 15.500 4 9 9 3.5Z" fill={bg} /><path d="M13.3 2.5C13.5 6 14 8 13 10.5C12 12 9.5 11.5 9.5 9.5C9.5 7.5 12 5 13.3 2.5Z" fill={bg} /></svg>
);
const Cmd = () => (
  <S><rect x="1" y="2.500" width="22" height="18.5" fill="#000" stroke="#9a9a9a" /><rect x="1.5" y="3" width="21" height="2" fill="#d5d5d5" /><path d="M2 14Q12 5 22 7V5.5H2Z" fill="#262626" /><path d="M6.5 7.5H4.5V10.500H6.5M8.5 8V8.8M8.5 10V10.8M10.5 7.5L12.5 10.5M14 10.5H19" stroke="#e8e8e8" fill="none" /></S>
);
const TaskView = () => (
  <Line w={18} h={16} c="#fff" sw={1.2}><path d="M1.5 0V2.5H11.5V0M1.5 16V13.5H11.5V16M1.5 5.5H11.5V10.5H1.5ZM15.5 0V4M15.5 8V16" /><path d="M15.5 4V7.5" strokeWidth="3" /></Line>
);

const TaskbarView = () => (
  <Taskbar>
    <Start><svg width="16" height="16" viewBox="0 0 16 16" fill="#fff"><path d="M0 2.2L6.5 1.3V7.6H0ZM7.3 1.2L16 0V7.6H7.3ZM0 8.4H6.5V14.7L0 13.8ZM7.3 8.4H16V16L7.3 14.8Z" /></svg></Start>
    <Search><Line w={18} h={18} c="#222" sw={1.3}><circle cx="11" cy="6.8" r="5.7" /><path d="M7 11L1 17" /></Line><SearchText>Type here to search</SearchText></Search>
    <AppButton><TaskView /></AppButton>
    <Apps>
      <AppButton $line="on"><Ubuntu /></AppButton>
      <AppButton $line="on"><Brave /></AppButton>
      <AppButton $line="on"><Firefox /></AppButton>
      <AppButton><Chrome /></AppButton>
      <AppButton><Edge /></AppButton>
      <AppButton $line="full"><OperaTaskLogo /></AppButton>
      <AppButton $line="on"><VsCode /></AppButton>
      <AppButton $line="on"><Notepad /></AppButton>
      <AppButton $line="stack"><Explorer /></AppButton>
      <AppButton><Store /></AppButton>
      <AppButton><Mail /></AppButton>
      <AppButton><Nextcloud /></AppButton>
      <AppButton><Matter /></AppButton>
      <AppButton $line="on"><Cmd /></AppButton>
    </Apps>
    <Tray>
      <TrayCell><Line w={12} h={8} c="#fff" sw={1.3}><path d="M.5 6.5L6 1L11.5 6.5" /></Line></TrayCell>
      <TrayCell><svg width="17" height="12" viewBox="0 0 17 12"><path d="M5 4A4 4 0 0 1 12 3L16 6L10 8Z" fill="#8a8a8a" /><path d="M3.5 11.5A3.3 3.3 0 0 1 3.5 5A4 4 0 0 1 9 5.5L13.5 6A2.8 2.8 0 0 1 14 11.5Z" fill="#f2f2f2" /></svg></TrayCell>
      <TrayCell><Matter c="#242424" s={15} sw={1.8} /></TrayCell>
      <TrayCell><Line w={14} h={14} c="#fff" sw={1.3}><circle cx="7" cy="7" r="6.2" /><path d="M3.8 7L6.2 9.4L10.6 4.8" /></Line></TrayCell>
      <TrayCell $w={25}><Line w={17} h={14} c="#fff" sw={1.1}><path d="M5.5 4.5H15V11H5.5ZM16 6.5V9M1 3H5V5.5Q5 7 3 7Q1 7 1 5.5ZM2 1V3M4 1V3M3 7V11H5" /><path d="M7 6H13.5V9.5H7Z" fill="#fff" /></Line></TrayCell>
      <TrayCell><Line w={14} h={14} c="#fff" sw={1.2}><path d="M1.5 13C1.5 6 6 1.5 13 1.5" opacity=".6" /><path d="M4.5 13C4.5 8 8 4.5 13 4.5M7.5 13C7.5 10 10 7.5 13 7.5M10.5 13C10.5 11.5 11.5 10.5 13 10.5" /></Line></TrayCell>
      <TrayCell><Line w={17} h={14} c="#fff" sw={1.2}><path d="M1 5H3.5L7 1.5V12.5L3.5 9H1ZM9 5Q10.5 7 9 9" /><path d="M11 3.5Q13.5 7 11 10.5" opacity=".7" /><path d="M13.5 2Q17 7 13.5 12" opacity=".5" /></Line></TrayCell>
      <TrayCell $w={33}>ENG</TrayCell>
      <Clock>10:10 PM<br />10/11/2020</Clock>
      <TrayCell $w={36} $indent={5}>
        <svg width="26" height="26" viewBox="0 0 26 26">
          <path d="M1 1H17V12H8L5 15V12H1Z" fill="#fff" /><path d="M4 4H14M4 6.5H14M4 9H11" stroke="#242424" strokeWidth="1.1" />
          <circle cx="16.5" cy="16.5" r="7.8" fill="#3a3a3a" stroke="#888" />
          <text x="16.5" y="20.5" fontSize="11.5" fill="#fff" textAnchor="middle" fontFamily='"Open Sans", sans-serif'>3</text>
        </svg>
      </TrayCell>
      <ShowDesktop />
    </Tray>
  </Taskbar>
);

const items: [string, string][] = [
  ["Overview", P.dash], ["samsung", P.dash], ["Map", P.map], ["Logbook", P.log], ["History", P.hist],
  ["Grafana", P.gantt], ["InfluxDB", P.chart], ["Visual Studio Code", P.vsc], ["Media Browser", P.media],
];
const tools: [string, string][] = [["Developer Tools", P.hammer], ["Supervisor", P.ha], ["Configuration", P.cog]];

export default function App() {
  return (
    <Desktop>
      <Global />
      <Upper>
        <Wallpaper />
        <Browser>
          <OperaRail />
          <Main>
            <BrowserTabs />
            <Address />
            <Page>
              <Sidebar>
                <SideHeader><Mdi d={P.menu} fill="#757575" /><SideTitle>Home Assistant</SideTitle></SideHeader>
                <SideList>{items.map(([t, d], i) => <Item key={t} $active={i === 0}><Mdi d={d} /><ItemText>{t}</ItemText></Item>)}</SideList>
                <SideBottom>{tools.map(([t, d]) => <Item key={t}><Mdi d={d} /><ItemText>{t}</ItemText></Item>)}</SideBottom>
                <SideFooter>
                  <Item><Mdi d={P.bell} /><ItemText>Notifications</ItemText></Item>
                  <Item><Avatar>h</Avatar><ItemText>ha</ItemText></Item>
                </SideFooter>
              </Sidebar>
              <Content>
                <Header>
                  <HeaderRow><HeaderTitle>Casetta - Ugchelen.</HeaderTitle><Mdi d={P.dots} fill="#fff" /></HeaderRow>
                  <ViewTabs>
                    <ViewTab $w={78}>HOME</ViewTab>
                    <ViewTab $w={53} $active>
                      <svg width="26.4" height="26.4" viewBox="0 0 24 24">
                        <path fill="#fff" fillRule="evenodd" d="M12 2C16 2 19.2 5.2 19.2 9C19.2 11.5 18 13.5 15.8 16C14 18.2 13 19.5 12.6 21.8Q12 22.6 11.4 21.8C11 19.5 10 18.2 8.2 16C6 13.5 4.8 11.5 4.8 9C4.8 5.2 8 2 12 2ZM12 6.3A2.8 2.8 0 1 0 12 11.9A2.8 2.8 0 1 0 12 6.3Z" />
                        <path d="M6.5 4.5L10 7.2M10 11.5L6 15.5M14 7L17.5 3.8" stroke="#03a9f4" strokeWidth=".8" />
                      </svg>
                    </ViewTab>
                  </ViewTabs>
                </Header>
                <Column>
                  <Card>
                    <CardTitle>Family Map</CardTitle>
                    <CardText>This is the Map Cards where you can find all family members around the World.</CardText>
                  </Card>
                  <MapCard>
                    <MapArt />
                    <Marker $x={200.5} $y={287.4} $c="#1b8ad0">ivP</Marker>
                    <Marker $x={226.8} $y={325.8} $c="#9850a5">S</Marker>
                    <ZoomBox>
                      <ZoomButton><Line w={14} h={14} c="#000" sw={2}><path d="M7 .5V13.5M.5 7H13.5" /></Line></ZoomButton>
                      <ZoomButton><Line w={14} h={14} c="#000" sw={2}><path d="M.5 7H13.5" /></Line></ZoomButton>
                    </ZoomBox>
                    <Focus><Mdi d={P.focus} fill="#212121" /></Focus>
                    <Attribution><a>Leaflet</a> | © <a>OpenStreetMap</a>, © <a>CARTO</a></Attribution>
                  </MapCard>
                </Column>
              </Content>
            </Page>
          </Main>
        </Browser>
      </Upper>
      <TaskbarView />
    </Desktop>
  );
}
